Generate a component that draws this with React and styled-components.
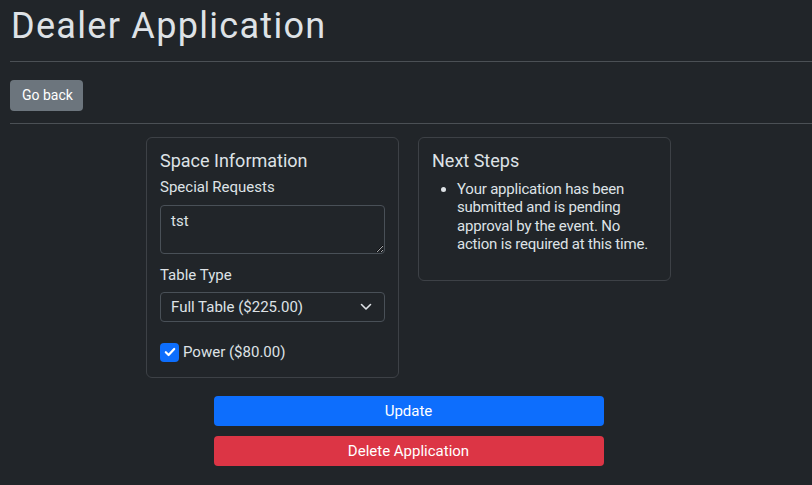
import React from "react";
import styled, { createGlobalStyle } from "styled-components";

const GlobalStyle = createGlobalStyle`
  body {
    margin: 0;
    background-color: #212529;
    color: #dee2e6;
    font-family: Roboto, "Liberation Sans", sans-serif;
  }
`;

const Page = styled.div`
  padding: 5px 0 20px 10px;
`;

const Title = styled.h1`
  font-size: 36px;
  font-weight: 400;
  line-height: 1.2;
  letter-spacing: 1.3px;
  margin: 0 0 13px 1px;
`;

const Rule = styled.hr`
  border: 0;
  border-top: 1px solid #4b5055;
  margin: ${(props) => props.margin || "0"};
`;

const BackButton = styled.button`
  font-family: inherit;
  font-size: 14px;
  line-height: 21px;
  height: 31px;
  padding: 0 10px 0 12px;
  color: #fff;
  background-color: #6c757d;
  border: 0;
  border-radius: 4px;
`;

const Content = styled.div`
  padding-right: 5px;
  display: flex;
  flex-direction: column;
  align-items: center;
`;

const Cards = styled.div`
  display: flex;
  align-items: flex-start;
  gap: 19px;
`;

const Card = styled.section`
  box-sizing: border-box;
  width: 253px;
  border: 1px solid #3d4146;
  border-radius: 6px;
  padding: 12px 13px ${(props) => props.bottom || "14px"};
`;

const CardTitle = styled.h5`
  font-size: 18px;
  font-weight: 400;
  line-height: 21.6px;
  margin: 0 0 4px;
`;

const Label = styled.label`
  display: block;
  font-size: 15px;
  line-height: 22.5px;
  margin-bottom: ${(props) => props.gap || "6px"};
`;

const TextArea = styled.textarea`
  display: block;
  box-sizing: border-box;
  width: 100%;
  height: 49px;
  margin: 0 0 10px;
  padding: 5px 10px;
  font-family: inherit;
  font-size: 15px;
  line-height: 20px;
  color: #dee2e6;
  background-color: #212529;
  border: 1px solid #495057;
  border-radius: 4px;
  resize: vertical;
`;

const SelectBox = styled.div`
  box-sizing: border-box;
  height: 30px;
  display: flex;
  align-items: center;
  justify-content: space-between;
  padding: 0 12px 0 10px;
  font-size: 15px;
  border: 1px solid #495057;
  border-radius: 4px;
  margin-bottom: 21px;
`;

const CheckRow = styled.div`
  display: flex;
  align-items: center;
  gap: 4px;
  font-size: 15px;
`;

const CheckMark = styled.span`
  width: 19px;
  height: 19px;
  border-radius: 4px;
  background-color: #0d6efd;
  display: flex;
  align-items: center;
  justify-content: center;
`;

const Steps = styled.ul`
  margin: 0 0 13px;
  padding-left: 25px;
  font-size: 15px;
  letter-spacing: -0.2px;
  line-height: 18.5px;
  padding-top: 4px;
`;

const Actions = styled.div`
  width: 390px;
  margin-top: 18px;
  display: flex;
  flex-direction: column;
  gap: 10px;
`;

const ActionButton = styled.button`
  height: 30px;
  font-family: inherit;
  font-size: 15px;
  color: #fff;
  background-color: ${(props) => (props.danger ? "#dc3545" : "#0d6efd")};
  border: 0;
  border-radius: 4px;
`;

export default function App() {
  return (
    <>
      <GlobalStyle />
      <Page>
        <Title>Dealer Application</Title>
        <Rule margin="0 0 18px" />
        <BackButton>Go back</BackButton>
        <Rule margin="12px 0 13px" />
        <Content>
          <Cards>
            <Card bottom="15px">
              <CardTitle>Space Information</CardTitle>
              <Label gap="7px">Special Requests</Label>
              <TextArea defaultValue="tst" />
              <Label gap="5px">Table Type</Label>
              <SelectBox>
                <span>Full Table ($225.00)</span>
                <svg width="12" height="8" viewBox="0 0 12 8">
                  <path d="M1.5 1.5 6 6l4.5-4.5" fill="none" stroke="#dee2e6" strokeWidth="1.6" strokeLinecap="round" strokeLinejoin="round" />
                </svg>
              </SelectBox>
              <CheckRow>
                <CheckMark>
                  <svg width="12" height="10" viewBox="0 0 12 10">
                    <path d="M1.8 5.2 4.6 8l5.6-6" fill="none" stroke="#fff" strokeWidth="2.2" strokeLinecap="round" strokeLinejoin="round" />
                  </svg>
                </CheckMark>
                <span>Power ($80.00)</span>
              </CheckRow>
            </Card>
            <Card bottom="13px">
              <CardTitle>Next Steps</CardTitle>
              <Steps>
                <li>
                  Your application has been submitted and is pending approval
                  by the event. No action is required at this time.
                </li>
              </Steps>
            </Card>
          </Cards>
          <Actions>
            <ActionButton>Update</ActionButton>
            <ActionButton danger>Delete Application</ActionButton>
          </Actions>
        </Content>
      </Page>
    </>
  );
}
